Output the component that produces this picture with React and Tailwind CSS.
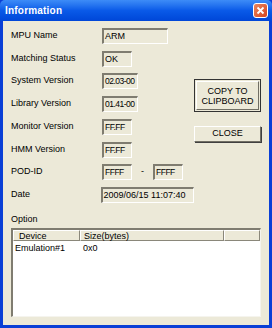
export default function App() {
  const font = { fontFamily: '"Liberation Sans", Arial, sans-serif' };
  const base =
    "h-[16px] bg-[#ECE9D8] border-t-2 border-l-2 border-b border-r border-t-[#7f7c70] border-l-[#7f7c70] border-b-white border-r-white pl-[1px] leading-[12px] text-black whitespace-nowrap overflow-hidden";
  const field = `${base} text-[8.5px] tracking-[-0.5px]`;
  const wide = `${base} text-[9px]`;
  const Row = ({ label, children, mt }) => (
    <div className={`flex items-center h-[16px] ${mt}`}>
      <div className="w-[91px] text-[9px] text-black whitespace-nowrap">{label}</div>
      {children}
    </div>
  );
  const hdr =
    "border-t border-l border-t-white border-l-white border-b border-r border-b-[#8a877a] border-r-[#8a877a]";
  return (
    <div style={font} className="w-[272px] h-[328px] bg-[#0a3fd6] flex flex-col">
      <div className="h-[21px] flex items-center justify-between pl-[5px] pr-[4px] bg-gradient-to-b from-[#3d8cf7] via-[#0a5ae8] to-[#0046d8] rounded-t-[5px]">
        <span className="text-white font-bold text-[10px] tracking-[0.2px]">Information</span>
        <div className="w-[15px] h-[15px] rounded-[3px] border border-white bg-gradient-to-br from-[#e8845c] to-[#d5431c] flex items-center justify-center">
          <svg width="9" height="9" viewBox="0 0 9 9">
            <path d="M1.5 1.5 L7.5 7.5 M7.5 1.5 L1.5 7.5" stroke="white" strokeWidth="1.8" />
          </svg>
        </div>
      </div>
      <div className="flex-1 mx-[3px] mb-[3px] bg-[#ECE9D8] flex flex-col px-[8px] pt-[7px]">
        <div className="flex">
          <div className="flex flex-col w-[183px]">
            <Row label="MPU Name" mt="">
              <div className={`${wide} w-[66px]`}>ARM</div>
            </Row>
            <Row label="Matching Status" mt="mt-[7px]">
              <div className={`${wide} w-[30px]`}>OK</div>
            </Row>
            <Row label="System Version" mt="mt-[6px]">
              <div className={`${field} w-[36px]`}>02.03-00</div>
            </Row>
            <Row label="Library Version" mt="mt-[7px]">
              <div className={`${field} w-[36px]`}>01.41-00</div>
            </Row>
            <Row label="Monitor Version" mt="mt-[7px]">
              <div className={`${field} w-[30px]`}>FF.FF</div>
            </Row>
            <Row label="HMM Version" mt="mt-[7px]">
              <div className={`${field} w-[30px]`}>FF.FF</div>
            </Row>
            <Row label="POD-ID" mt="mt-[6px]">
              <div className={`${field} w-[30px]`}>FFFF</div>
              <div className="w-[21px] text-center text-[9px]">-</div>
              <div className={`${field} w-[30px]`}>FFFF</div>
            </Row>
            <Row label="Date" mt="mt-[7px]">
              <div className={`${wide} w-[95px]`}>2009/06/15 11:07:40</div>
            </Row>
          </div>
          <div className="flex flex-col pt-[51px]">
            <div className="w-[67px] h-[33px] border border-[#333] bg-[#ECE9D8] p-[1px]">
              <div className="w-full h-full border border-t-white border-l-white border-b-[#716f64] border-r-[#716f64] flex items-center justify-center text-center text-[9px] leading-[10px]">
                COPY TO<br />CLIPBOARD
              </div>
            </div>
            <div className="mt-[14px] w-[67px] h-[16px] border border-t-white border-l-white border-b-[#716f64] border-r-[#716f64] shadow-[1px_1px_0_#404040] flex items-center justify-center text-[9px]">
              CLOSE
            </div>
          </div>
        </div>
        <div className="mt-[11px] text-[9px] h-[12px] flex items-center">Option</div>
        <div className="mt-[2px] w-[250px] h-[89px] bg-white border-t-2 border-l-2 border-b border-r border-t-[#7f7c70] border-l-[#7f7c70] border-b-[#f5f4ee] border-r-[#f5f4ee] flex flex-col">
          <div className="flex h-[11px] bg-[#ECE9D8] text-[9px] leading-[10px]">
            <div className={`w-[67px] pl-[5px] ${hdr}`}>Device</div>
            <div className={`w-[144px] pl-[3px] ${hdr}`}>Size(bytes)</div>
            <div className={`flex-1 ${hdr}`}></div>
          </div>
          <div className="flex text-[9px] leading-[12px] mt-[1px]">
            <div className="w-[67px] pl-[2px]">Emulation#1</div>
            <div className="pl-[3px]">0x0</div>
          </div>
        </div>
      </div>
    </div>
  );
}
